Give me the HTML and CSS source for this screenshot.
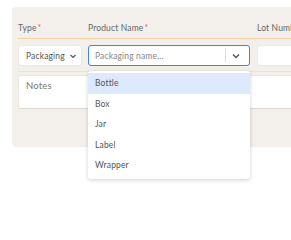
FILE: index.html
```html
<!DOCTYPE html>
<html lang="en">
<head>
    <meta charset="UTF-8">
    <meta name="viewport" content="width=device-width, initial-scale=1.0">
    <title>Add Item</title>
    <link rel="stylesheet" href="styles.css">
</head>
<body>
    <div class="page">
        <div class="panel">
            <div class="row head">
                <div class="label">Type<span class="req">*</span></div>
                <div class="label">Product Name<span class="req">*</span></div>
                <div class="label">Lot Number</div>
            </div>
            <div class="row inputs">
                <div class="select">
                    <span>Packaging</span>
                    <svg width="8" height="8" viewBox="0 0 8 8"><path d="M1.5 3l2.5 2.5 2.5-2.5" fill="none" stroke="#555" stroke-width="1.2"/></svg>
                </div>
                <div class="combo-wrap">
                    <div class="combo">
                        <span class="placeholder">Packaging name...</span>
                        <span class="sep"></span>
                        <svg width="10" height="10" viewBox="0 0 10 10"><path d="M2 3.5l3 3 3-3" fill="none" stroke="#555" stroke-width="1.4"/></svg>
                    </div>
                    <div class="menu">
                        <div class="item active">Bottle</div>
                        <div class="item">Box</div>
                        <div class="item">Jar</div>
                        <div class="item">Label</div>
                        <div class="item">Wrapper</div>
                    </div>
                </div>
                <div class="text-input"></div>
            </div>
            <div class="notes">Notes</div>
        </div>
    </div>
</body>
</html>
```

FILE: styles.css
```css
html {
    overflow: hidden;
}
body {
    margin: 0;
    padding: 0;
    min-height: 240px;
    background-color: white;
    font-family: Lato, "Noto Sans", Arial, sans-serif;
    font-size: 8.5px;
    letter-spacing: 0.15px;
    color: #555;
}
.page {
    padding: 7px 0 0 12px;
    height: 240px;
    box-sizing: border-box;
}
.panel {
    width: 420px;
    height: 140px;
    background-color: #f3f0eb;
    border-radius: 4px;
    padding: 0 6px;
    box-sizing: border-box;
}
.row {
    display: grid;
    grid-template-columns: 64px 162px 1fr;
    column-gap: 6px;
}
.head {
    height: 32px;
    align-items: center;
    padding-top: 10px;
    box-sizing: border-box;
    border-bottom: 1px solid #f3d3a3;
}
.head .label:nth-child(3) {
    padding-left: 1px;
}
.label {
    color: #666;
}
.req {
    color: #ef5b5b;
    margin-left: 1px;
}
.inputs {
    padding: 6px 0 5px;
    border-bottom: 1px solid #e6e2dc;
}
.select, .combo, .text-input {
    height: 21px;
    box-sizing: border-box;
    background-color: white;
    border-radius: 3px;
    display: flex;
    align-items: center;
}
.select {
    border: 1px solid #ece8e2;
    padding: 0 4px 0 7px;
    justify-content: space-between;
}
.combo-wrap {
    position: relative;
}
.combo {
    border: 1.5px solid #3f84e5;
    padding: 0 8px 0 6px;
}
.placeholder {
    flex: 1;
    color: #888;
}
.sep {
    width: 1px;
    height: 13px;
    background-color: #ddd;
    margin-right: 5px;
}
.text-input {
    border: 1px solid #ece8e2;
    margin-left: 1px;
}
.notes {
    margin-top: 3px;
    height: 34px;
    background-color: white;
    border: 1px solid #ece8e2;
    border-bottom-color: #dcd8d2;
    border-radius: 3px;
    box-sizing: border-box;
    padding: 4px 7px;
    font-size: 9.5px;
    color: #777;
}
.menu {
    position: absolute;
    top: 26px;
    left: 0;
    width: 162px;
    background-color: white;
    border-radius: 3px;
    box-shadow: 0 1px 4px rgba(0, 0, 0, 0.18);
    padding: 2px 0 3px;
    z-index: 2;
}
.item {
    height: 20.6px;
    line-height: 21px;
    padding: 0 7px;
    color: #555;
}
.item.active {
    background-color: #dde9fc;
}
```
